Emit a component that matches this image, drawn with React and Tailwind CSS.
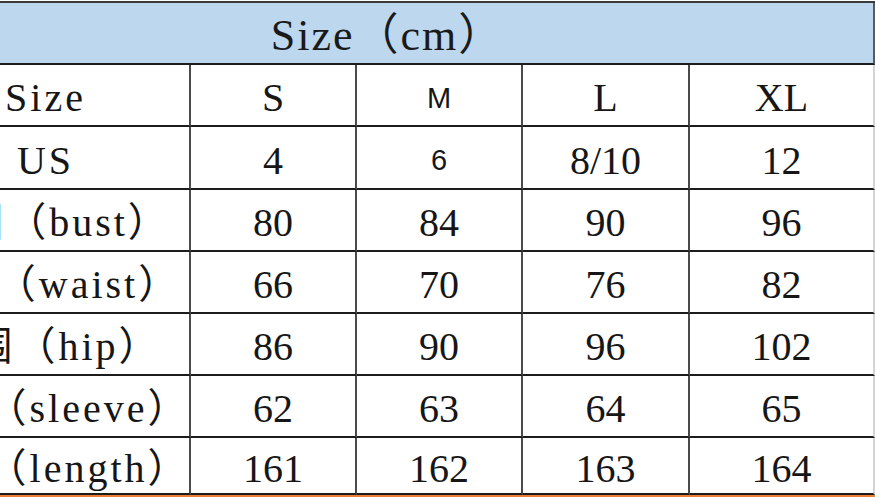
const cols = ["S", "M", "L", "XL"];

const rows = [
    { label: "Size", values: ["S", "M", "L", "XL"], h: "h-[62px]" },
    { label: "US", values: ["4", "6", "8/10", "12"], h: "h-[63px]" },
    { label: "胸围（bust）", values: ["80", "84", "90", "96"], h: "h-[62px]" },
    { label: "腰围（waist）", values: ["66", "70", "76", "82"], h: "h-[62px]" },
    { label: "臀围（hip）", values: ["86", "90", "96", "102"], h: "h-[62px]" },
    { label: "袖长（sleeve）", values: ["62", "63", "64", "65"], h: "h-[62px]" },
    { label: "衣长（length）", values: ["161", "162", "163", "164"], h: "h-[57px]" },
];

// column widths incl. right border
const widths = ["w-[289px]", "w-[166px]", "w-[166px]", "w-[167px]", "w-[185px]"];

const Cell = ({ children, width, height, last, sans }) => (
    <div
        className={`${width} ${height} shrink-0 flex items-center justify-center pt-[6px] border-b-2 border-b-[#1c1c1c] border-r-2 ${
            last ? "border-r-[#d4d4d4]" : "border-r-[#4a4a4a]"
        } ${
            sans
                ? "text-[29px] [font-family:'Liberation_Sans',Arial,sans-serif]"
                : "text-[40px] [font-family:'Liberation_Serif','Noto_Sans_CJK_SC',serif]"
        } text-[#161616] leading-none whitespace-nowrap`}
    >
        {children}
    </div>
);

const App = () => {
    return (
        <div className="w-[875px] h-[497px] overflow-hidden bg-white pt-px">
            <div className="ml-[-100px] w-[975px] border-t-2 border-l-2 border-t-[#3a3a3a] border-l-[#4a4a4a]">
                {/* Title band */}
                <div className="h-[62px] bg-[#bdd7ee] border-b-2 border-b-[#1c1c1c] border-r-2 border-r-[#5a5a5a] flex items-center justify-center pt-[6px]">
                    <span className="text-[44px] leading-none tracking-[2px] text-[#1a1a1a] [font-family:'Liberation_Serif','Noto_Sans_CJK_SC',serif]">
                        Size（cm）
                    </span>
                </div>

                {rows.map((row) => (
                    <div key={row.label} className="flex">
                        <Cell width={widths[0]} height={row.h}>
                            <span className="tracking-[3px]">{row.label}</span>
                        </Cell>
                        {row.values.map((v, i) => (
                            <Cell
                                key={cols[i]}
                                width={widths[i + 1]}
                                height={row.h}
                                last={i === 3}
                                sans={i === 1 && (v === "M" || v === "6")}
                            >
                                {v}
                            </Cell>
                        ))}
                    </div>
                ))}
            </div>
            <div className="h-[2px] bg-[#ed7d31]"></div>
        </div>
    );
};

export default App;
